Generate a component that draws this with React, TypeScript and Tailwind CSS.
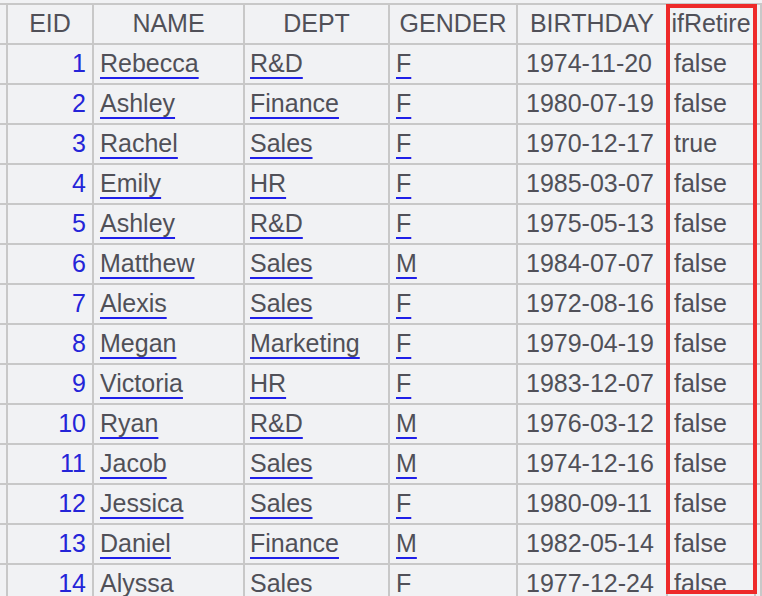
type Row = [number, string, string, string, string, string];

const rows: Row[] = [
  [1, 'Rebecca', 'R&D', 'F', '1974-11-20', 'false'],
  [2, 'Ashley', 'Finance', 'F', '1980-07-19', 'false'],
  [3, 'Rachel', 'Sales', 'F', '1970-12-17', 'true'],
  [4, 'Emily', 'HR', 'F', '1985-03-07', 'false'],
  [5, 'Ashley', 'R&D', 'F', '1975-05-13', 'false'],
  [6, 'Matthew', 'Sales', 'M', '1984-07-07', 'false'],
  [7, 'Alexis', 'Sales', 'F', '1972-08-16', 'false'],
  [8, 'Megan', 'Marketing', 'F', '1979-04-19', 'false'],
  [9, 'Victoria', 'HR', 'F', '1983-12-07', 'false'],
  [10, 'Ryan', 'R&D', 'M', '1976-03-12', 'false'],
  [11, 'Jacob', 'Sales', 'M', '1974-12-16', 'false'],
  [12, 'Jessica', 'Sales', 'F', '1980-09-11', 'false'],
  [13, 'Daniel', 'Finance', 'M', '1982-05-14', 'false'],
  [14, 'Alyssa', 'Sales', 'F', '1977-12-24', 'false'],
];

const cell = 'h-10 border-r-2 border-b-2 border-[#c8c8c8] flex items-center overflow-hidden whitespace-nowrap';
const link = 'underline decoration-[#1f1fe8] decoration-2 underline-offset-[5px]';

const App = () => {
  return (
    <div className="relative w-[762px] h-[596px] overflow-hidden bg-[#f1f2f4] pt-[3px] text-[25px] text-[#505058] font-['Liberation_Sans',Arial,sans-serif]">
      {/* 表格 */}
      <div className="grid grid-cols-[8px_86px_151px_145px_128px_150px_88px_1fr] border-t-2 border-[#c8c8c8]">
        <div className={cell}></div>
        <div className={`${cell} justify-center`}>EID</div>
        <div className={`${cell} justify-center`}>NAME</div>
        <div className={`${cell} justify-center`}>DEPT</div>
        <div className={`${cell} justify-center`}>GENDER</div>
        <div className={`${cell} justify-center`}>BIRTHDAY</div>
        <div className={`${cell} justify-center`}>ifRetire</div>
        <div className={cell}></div>

        {rows.map(([eid, name, dept, gender, birthday, retire]) => (
          <div key={eid} className="contents">
            <div className={cell}></div>
            <div className={`${cell} justify-end pr-[6px] text-[#2424d8]`}>{eid}</div>
            <div className={`${cell} pl-[6px]`}><span className={link}>{name}</span></div>
            <div className={`${cell} pl-[5px]`}><span className={link}>{dept}</span></div>
            <div className={`${cell} pl-[6px]`}><span className={link}>{gender}</span></div>
            <div className={`${cell} pl-[8px]`}>{birthday}</div>
            <div className={`${cell} pl-[6px]`}>{retire}</div>
            <div className={cell}></div>
          </div>
        ))}
      </div>

      {/* 红框标注 */}
      <div className="absolute left-[666px] top-[4px] w-[91px] h-[590px] border-4 border-[#ee2a2a] pointer-events-none"></div>
    </div>
  );
};

export default App;
